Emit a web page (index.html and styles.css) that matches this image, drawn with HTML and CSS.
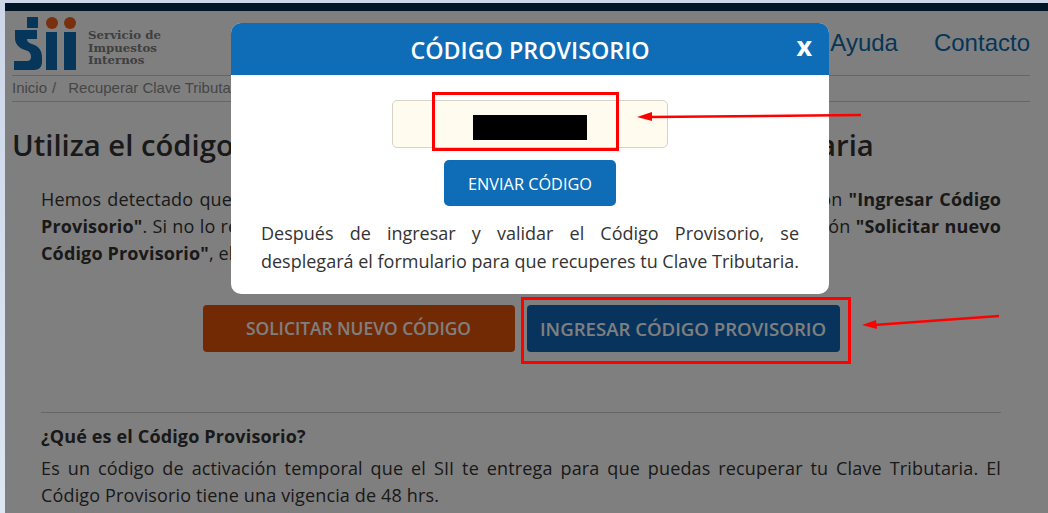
FILE: index.html
```html
<!DOCTYPE html>
<html lang="es">
<head>
    <meta charset="UTF-8">
    <meta name="viewport" content="width=device-width, initial-scale=1.0">
    <title>Recuperar Clave Tributaria</title>
    <link rel="stylesheet" href="styles.css">
</head>
<body>

    <div class="page">
        <div class="topbar"></div>

        <header class="header">
            <a class="logo" href="#">
                <svg class="logo-mark" width="62" height="54" viewBox="0 0 62 54">
                    <rect class="logo-blue" x="13" y="1" width="11" height="11"/>
                    <path class="logo-blue" d="M1 14H23V23H13C13 26 15 27 18 28C25 30 28 35 28 41V46C28 51 25 54 20 54H0V45H13C16 45 17 43 17 41C17 37 15 35 11 34C5 32 1 28 1 22Z"/>
                    <circle class="logo-red" cx="38" cy="7" r="6"/>
                    <circle class="logo-red" cx="56" cy="7" r="6"/>
                    <rect class="logo-blue" x="32" y="16" width="11" height="38"/>
                    <rect class="logo-blue" x="50" y="16" width="12" height="38"/>
                </svg>
                <span class="logo-text">Servicio de<br>Impuestos<br>Internos</span>
            </a>
            <nav class="nav">
                <a href="#">Ayuda</a>
                <a href="#">Contacto</a>
            </nav>
        </header>

        <div class="crumbs">
            <a href="#">Inicio</a><span class="crumb-sep">/</span><a href="#">Recuperar Clave Tributaria</a>
        </div>

        <main class="content">
            <h1>Utiliza el código provisorio para recuperar tu Clave Tributaria</h1>

            <div class="text-block">
                <p class="just">Hemos detectado que ya tienes un Código Provisorio. Si lo tienes a mano, presiona el botón <b>"Ingresar Código Provisorio"</b>. Si no lo recuerdas o no lo tienes a mano, puedes solicitar uno nuevo con el botón <b>"Solicitar nuevo Código Provisorio"</b>, el cual reemplazará al anterior.</p>

                <div class="actions">
                    <a class="btn btn-orange" href="#">SOLICITAR NUEVO CÓDIGO</a>
                    <a class="btn btn-blue" href="#">INGRESAR CÓDIGO PROVISORIO</a>
                </div>

                <hr>

                <h2>¿Qué es el Código Provisorio?</h2>
                <p class="just">Es un código de activación temporal que el SII te entrega para que puedas recuperar tu Clave Tributaria. El Código Provisorio tiene una vigencia de 48 hrs.</p>
            </div>
        </main>

        <div class="backdrop"></div>
    </div>

    <div class="modal">
        <div class="modal-head">
            <span class="modal-title">CÓDIGO PROVISORIO</span>
            <span class="modal-close">x</span>
        </div>
        <div class="modal-body">
            <div class="code-input"></div>
            <a class="btn-send" href="#">ENVIAR CÓDIGO</a>
            <p class="just">Después de ingresar y validar el Código Provisorio, se desplegará el formulario para que recuperes tu Clave Tributaria.</p>
        </div>
    </div>

    <!-- marcas hechas sobre la captura -->
    <div class="mark-box mark-input"></div>
    <div class="mark-black"></div>
    <div class="mark-box mark-button"></div>
    <svg class="arrows" width="1048" height="513" viewBox="0 0 1048 513">
        <path d="M861 115 650 117" />
        <path d="M999 316 874 325" />
        <polygon points="637,117 652,112 652,121" />
        <polygon points="862,325 876,320 877,329" />
    </svg>

</body>
</html>
```

FILE: styles.css
```css
* {
    box-sizing: border-box;
}

body {
    margin: 0;
    height: 513px;
    overflow: hidden;
    background: linear-gradient(#ccd6e8, #dde7f3);
    font-family: "Open Sans", Arial, sans-serif;
    color: #333;
}

a {
    text-decoration: none;
    color: inherit;
}

.page {
    position: relative;
    margin: 3px 0 0 5px;
    height: 510px;
    background-color: #fff;
    overflow: hidden;
}

.topbar {
    height: 8px;
    background-color: #002c4e;
}

.backdrop {
    position: absolute;
    inset: 0;
    background-color: rgba(0, 0, 0, 0.5);
}

/* Cabecera */
.header {
    display: flex;
    justify-content: space-between;
    margin: 0 18px 0 7px;
    height: 65px;
    padding: 5px 0 0 2px;
    border-bottom: 1px solid #ccc;
}

.logo {
    display: flex;
    gap: 12px;
    height: 54px;
}

.logo-blue {
    fill: #0c6cb4;
}

.logo-red {
    fill: #f0601f;
}

.logo-text {
    padding-top: 13px;
    font-family: "DejaVu Serif", Georgia, serif;
    font-size: 11.8px;
    font-weight: bold;
    line-height: 12.5px;
    color: #808080;
}

.nav {
    display: flex;
    gap: 36px;
    padding-top: 12px;
    font-family: "Liberation Sans", Arial, sans-serif;
    font-size: 24px;
    line-height: 30px;
    color: #0b6cb0;
}

.crumbs {
    display: flex;
    margin: 0 18px 0 7px;
    height: 26px;
    border-bottom: 1px solid #ccc;
    font-family: "Liberation Sans", Arial, sans-serif;
    font-size: 15px;
    line-height: 24px;
    color: #8c8c8c;
}

.crumb-sep {
    margin: 0 12px 0 5px;
}

/* Contenido */
.content {
    padding: 0 18px 0 7px;
}

h1 {
    margin: 25px 0 0;
    font-size: 29.25px;
    font-weight: 600;
    line-height: 36px;
    color: #333;
    white-space: nowrap;
}

.text-block {
    margin: 23px 29px 0 29px;
    font-size: 18px;
    line-height: 27px;
    letter-spacing: 0.15px;
}

.text-block p {
    margin: 0;
}

.just {
    text-align: justify;
}

.actions {
    display: flex;
    justify-content: center;
    gap: 12px;
    margin: 38px 0 0;
    letter-spacing: 0;
}

.btn {
    display: block;
    height: 47px;
    border-radius: 4px;
    font-weight: 600;
    line-height: 47px;
    color: #fff;
    text-align: center;
}

.btn-orange {
    width: 312px;
    background-color: #e4540a;
    font-size: 17.35px;
}

.btn-blue {
    width: 313px;
    background-color: #0e66b8;
    font-size: 18.6px;
}

hr {
    margin: 60px 0 0;
    border: 0;
    border-top: 1px solid #ccc;
}

h2 {
    margin: 10px 0 5px;
    font-size: 18px;
    font-weight: 700;
    line-height: 27px;
}

/* Modal */
.modal {
    position: absolute;
    left: 231px;
    top: 23px;
    width: 598px;
    height: 271px;
    border-radius: 10px;
    background-color: #fff;
    overflow: hidden;
}

.modal-head {
    position: relative;
    height: 52px;
    background-color: #0f6cb6;
    color: #fff;
    text-align: center;
}

.modal-title {
    font-size: 23.3px;
    font-weight: 600;
    line-height: 55px;
}

.modal-close {
    position: absolute;
    right: 17px;
    top: 8px;
    font-size: 27px;
    font-weight: 700;
    line-height: 30px;
}

.modal-body {
    display: flex;
    flex-direction: column;
    align-items: center;
    padding: 25px 30px 0;
}

.code-input {
    width: 276px;
    height: 48px;
    border: 1px solid #d5d2c8;
    border-radius: 5px;
    background-color: #fffbee;
}

.btn-send {
    display: block;
    width: 172px;
    height: 46px;
    margin-top: 12px;
    border-radius: 5px;
    background-color: #0f6cb6;
    color: #fff;
    font-size: 16.3px;
    line-height: 48px;
    text-align: center;
}

.modal-body p {
    margin: 13px 0 0;
    font-size: 18px;
    line-height: 28px;
}

/* Marcas rojas */
.mark-box {
    position: absolute;
    border: 3px solid #f00;
}

.mark-input {
    left: 432px;
    top: 92px;
    width: 187px;
    height: 59px;
}

.mark-button {
    left: 521px;
    top: 297px;
    width: 330px;
    height: 67px;
}

.mark-black {
    position: absolute;
    left: 473px;
    top: 115px;
    width: 114px;
    height: 25px;
    background-color: #000;
}

.arrows {
    position: absolute;
    left: 0;
    top: 0;
}

.arrows path {
    fill: none;
    stroke: #f00;
    stroke-width: 2.5;
}

.arrows polygon {
    fill: #f00;
}
```
